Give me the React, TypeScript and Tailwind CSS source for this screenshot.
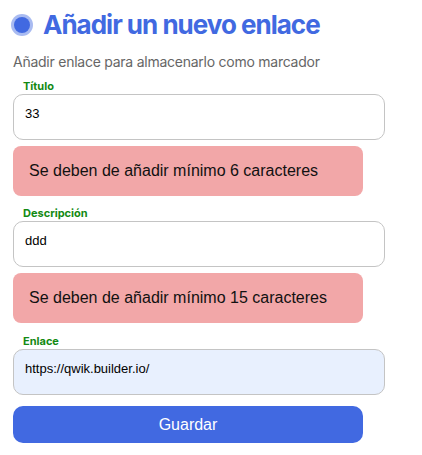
import React from "react";

function Field({ label, value, autofill }: { label: string; value: string; autofill?: boolean }) {
  return (
    <div className="flex flex-col">
      <label className="pl-[10px] text-[11px] font-bold leading-[13px] text-[#138a13] font-['Inter',sans-serif]">{label}</label>
      <div
        className={
          "mt-[1px] h-[46px] w-[372px] rounded-[10px] border border-[#c4c4c4] pl-[11px] pt-[11px] text-[13px] leading-[16px] text-black font-['Liberation_Sans',Arial,sans-serif] " +
          (autofill ? "bg-[#e8f0fe]" : "bg-white")
        }
      >
        {value}
      </div>
    </div>
  );
}

function ErrorBox({ text }: { text: string }) {
  return (
    <div className="mt-[6px] flex h-[50px] w-[350px] items-center rounded-[8px] bg-[#f2a7a8] pl-[16px] text-[16px] text-[#111] font-['Liberation_Sans',Arial,sans-serif]">
      {text}
    </div>
  );
}

export default function App() {
  return (
    <div className="min-h-[455px] w-[422px] bg-white pl-[13px] pt-[13px]">
      <div className="flex items-center">
        <div className="ml-[1px] h-[16px] w-[16px] rounded-full bg-[#4169e1] ring-[3px] ring-[#4169e1]/45" />
        <h1 className="ml-[13px] text-[26px] font-bold leading-[24px] tracking-[-1px] text-[#4169e1] font-['Inter',sans-serif]">
          Añadir un nuevo enlace
        </h1>
      </div>
      <p className="mt-[17px] text-[14px] leading-[16px] tracking-[-0.25px] text-[#666] font-['Inter',sans-serif]">
        Añadir enlace para almacenarlo como marcador
      </p>
      <div className="mt-[10px]">
        <Field label="Título" value="33" />
        <ErrorBox text="Se deben de añadir mínimo 6 caracteres" />
      </div>
      <div className="mt-[11px]">
        <Field label="Descripción" value="ddd" />
        <ErrorBox text="Se deben de añadir mínimo 15 caracteres" />
      </div>
      <div className="mt-[12px]">
        <Field label="Enlace" value="https://qwik.builder.io/" autofill />
      </div>
      <button className="mt-[11px] flex h-[37px] w-[350px] items-center justify-center rounded-[10px] bg-[#4169e1] text-[16px] text-white font-['Liberation_Sans',Arial,sans-serif]">
        Guardar
      </button>
    </div>
  );
}
